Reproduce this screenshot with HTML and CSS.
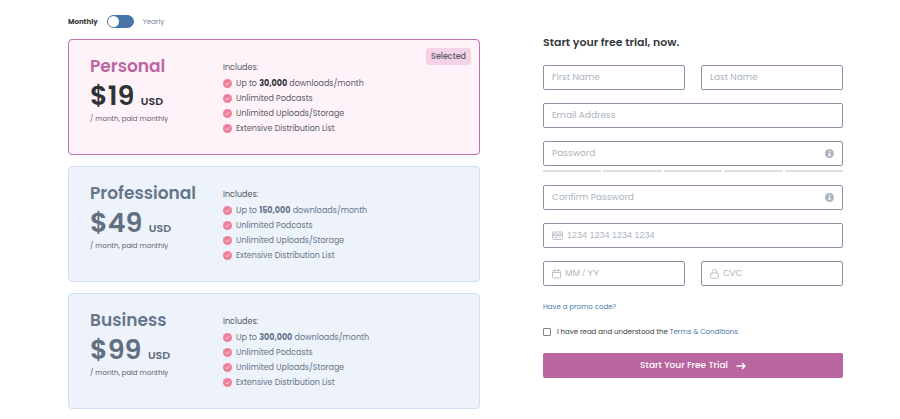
FILE: index.html
```html
<!DOCTYPE html>
<html lang="en">
<head>
<meta charset="utf-8">
<meta name="viewport" content="width=device-width, initial-scale=1">
<title>Start your free trial</title>
<link rel="stylesheet" href="styles.css">
</head>
<body>
<svg class="sprite" aria-hidden="true">
  <symbol id="check" viewBox="0 0 18 18"><circle cx="9" cy="9" r="9" fill="#f07f9b"/><path d="M5.5 9.2l2.4 2.3 4.6-4.6" fill="none" stroke="#fff" stroke-width="1.6"/></symbol>
  <symbol id="info" viewBox="0 0 18 18"><circle cx="9" cy="9" r="9" fill="#adb5c0"/><path d="M8 3.5h2.5V6H8zM6.8 7.5h3.7v5h1.2v1.7H6.8v-1.7H8V9.2H6.8z" fill="#fff"/></symbol>
</svg>
<main class="page">
  <section class="plans">
    <div class="billing">
      <span class="billing-active">Monthly</span>
      <button class="switch" type="button" role="switch" aria-checked="false" aria-label="Yearly billing"><span class="knob"></span></button>
      <span class="billing-other">Yearly</span>
    </div>
    <article class="plan plan-selected">
      <div class="summary">
        <h2 class="name">Personal</h2>
        <p class="price">$19 <span class="currency">USD</span></p>
        <p class="term">/ month, paid monthly</p>
      </div>
      <div class="details">
        <p class="includes">Includes:</p>
        <ul class="features">
          <li><svg class="check"><use href="#check"/></svg><span>Up to <b>30,000</b> downloads/month</span></li>
          <li><svg class="check"><use href="#check"/></svg><span>Unlimited Podcasts</span></li>
          <li><svg class="check"><use href="#check"/></svg><span>Unlimited Uploads/Storage</span></li>
          <li><svg class="check"><use href="#check"/></svg><span>Extensive Distribution List</span></li>
        </ul>
      </div>
      <span class="badge">Selected</span>
    </article>
    <article class="plan">
      <div class="summary">
        <h2 class="name">Professional</h2>
        <p class="price">$49 <span class="currency">USD</span></p>
        <p class="term">/ month, paid monthly</p>
      </div>
      <div class="details">
        <p class="includes">Includes:</p>
        <ul class="features">
          <li><svg class="check"><use href="#check"/></svg><span>Up to <b>150,000</b> downloads/month</span></li>
          <li><svg class="check"><use href="#check"/></svg><span>Unlimited Podcasts</span></li>
          <li><svg class="check"><use href="#check"/></svg><span>Unlimited Uploads/Storage</span></li>
          <li><svg class="check"><use href="#check"/></svg><span>Extensive Distribution List</span></li>
        </ul>
      </div>
    </article>
    <article class="plan">
      <div class="summary">
        <h2 class="name">Business</h2>
        <p class="price">$99 <span class="currency">USD</span></p>
        <p class="term">/ month, paid monthly</p>
      </div>
      <div class="details">
        <p class="includes">Includes:</p>
        <ul class="features">
          <li><svg class="check"><use href="#check"/></svg><span>Up to <b>300,000</b> downloads/month</span></li>
          <li><svg class="check"><use href="#check"/></svg><span>Unlimited Podcasts</span></li>
          <li><svg class="check"><use href="#check"/></svg><span>Unlimited Uploads/Storage</span></li>
          <li><svg class="check"><use href="#check"/></svg><span>Extensive Distribution List</span></li>
        </ul>
      </div>
    </article>
  </section>

  <form class="signup">
    <h1 class="title">Start your free trial, now.</h1>
    <div class="fields">
      <div class="pair">
        <label class="field"><input type="text" placeholder="First Name" aria-label="First Name"></label>
        <label class="field"><input type="text" placeholder="Last Name" aria-label="Last Name"></label>
      </div>
      <label class="field"><input type="email" placeholder="Email Address" aria-label="Email Address"></label>
      <div class="password">
        <label class="field"><input type="password" placeholder="Password" aria-label="Password"><svg class="info"><use href="#info"/></svg></label>
        <div class="strength"><i></i><i></i><i></i><i></i><i></i></div>
      </div>
      <label class="field"><input type="password" placeholder="Confirm Password" aria-label="Confirm Password"><svg class="info"><use href="#info"/></svg></label>
      <label class="field card-field">
        <svg class="icon" viewBox="0 0 11 10"><rect x=".5" y="1" width="10" height="7.5" rx="1"/><path d="M.5 3h10M.5 4.5h10M2.3 6.5h3.5M7.3 6.5h1.5"/></svg>
        <input type="text" placeholder="1234 1234 1234 1234" aria-label="Card number">
      </label>
      <div class="pair">
        <label class="field card-field">
          <svg class="icon icon-narrow" viewBox="0 0 9 10"><rect x=".5" y="1.5" width="8" height="7.5" rx="1"/><path d="M.5 3.5h8M2.5 0v2.5M6.5 0v2.5"/></svg>
          <input type="text" placeholder="MM / YY" aria-label="Expiry date">
        </label>
        <label class="field card-field">
          <svg class="icon icon-narrow" viewBox="0 0 9 10"><rect x=".7" y="4" width="7.6" height="5.3" rx="1"/><path d="M2.3 4V2.7a2.2 2.2 0 0 1 4.4 0V4"/></svg>
          <input type="text" placeholder="CVC" aria-label="CVC">
        </label>
      </div>
    </div>
    <a class="promo" href="#promo">Have a promo code?</a>
    <div class="consent">
      <input class="tick" type="checkbox" id="terms">
      <label for="terms">I have read and understood the <a href="#terms">Terms &amp; Conditions</a></label>
    </div>
    <button class="submit" type="submit">Start Your Free Trial
      <svg class="arrow" viewBox="0 0 10 8"><path d="M.5 4h8.5M6 1l3 3-3 3"/></svg>
    </button>
  </form>
</main>
</body>
</html>
```

FILE: styles.css
```css
* { box-sizing: border-box; }

body {
  margin: 0;
  background: #fff;
  color: #363a40;
  font: 7px/15px Poppins, Inter, sans-serif;
}

h1, h2, p, ul { margin: 0; padding: 0; }
ul { list-style: none; }
a { color: #4878ac; text-decoration: none; }
.sprite { display: none; }

.page {
  display: flex;
  align-items: flex-start;
  gap: 63px;
  padding: 15px 57px 10px 68px;
}

.plans { flex: 412 1 0; min-width: 0; display: flex; flex-direction: column; gap: 11px; }

.billing { display: flex; align-items: center; height: 13px; gap: 9px; line-height: 15px; }
.billing-active { font-weight: 700; }
.billing-other { color: #748496; }
.switch {
  display: flex;
  width: 27px;
  height: 13px;
  padding: 0;
  border: 1px solid #4575a9;
  border-radius: 7px;
  background: #4575a9;
}
.knob { width: 11px; height: 11px; border-radius: 50%; background: #fff; }

.plan {
  position: relative;
  display: grid;
  grid-template-columns: 133px 1fr;
  min-height: 116px;
  padding: 14px 21px;
  border: 1px solid #d0dff0;
  border-radius: 4px;
  background: #eef2fa;
  color: #65768a;
}
.plan-selected { border-color: #bf70aa; background: #fff3fa; color: #585c64; }

.name { font-size: 17px; line-height: 24px; font-weight: 600; }
.plan-selected .name { color: #bb64a1; }
.price { font-size: 27px; line-height: 36px; font-weight: 600; color: #607080; }
.currency { font-size: 11px; line-height: 1; }
.plan-selected .price { color: #303236; }
.term { color: #5c646e; line-height: 9px; white-space: nowrap; }

.includes { margin-top: 6px; color: #505860; font-size: 8px; line-height: 16px; }
.features li { display: flex; align-items: center; gap: 4px; height: 15px; font-size: 8px; }
.features b { font-weight: 700; }
.plan-selected b { color: #303236; }
.check { width: 9px; height: 9px; flex: none; }

.badge {
  position: absolute;
  top: 8px;
  right: 8px;
  padding: 1px 5px;
  border-radius: 3px;
  background: #f5d3e7;
  font-size: 8px;
  font-weight: 500;
}

.signup { flex: 300 1 0; min-width: 0; display: flex; flex-direction: column; padding-top: 19px; }
.title { margin-bottom: 15px; font-size: 11px; line-height: 16px; font-weight: 600; }
.fields { display: flex; flex-direction: column; gap: 13px; }
.pair { display: grid; grid-template-columns: repeat(2, minmax(0, 1fr)); gap: 16px; }

.field {
  display: flex;
  align-items: center;
  gap: 4px;
  height: 25px;
  padding: 0 8px;
  border: 1px solid #8793a3;
  border-radius: 2px;
}
.field input {
  flex: 1;
  width: 100%;
  min-width: 0;
  padding: 0;
  border: 0;
  outline: 0;
  background: none;
  color: #363a40;
  font: inherit;
  font-size: 9px;
}
.field input::placeholder { color: #adb4be; opacity: 1; }
.field.card-field input { font-family: "Liberation Sans", sans-serif; }
.info { width: 9px; height: 9px; flex: none; }
.icon { width: 11px; height: 10px; flex: none; fill: none; stroke: #bcc2ca; stroke-width: 1; }
.icon-narrow { width: 9px; }

.strength { display: grid; grid-template-columns: repeat(5, 1fr); gap: 2px; margin-top: 4px; }
.strength i { height: 2px; background: #dcdee1; }

.promo { align-self: flex-start; margin-top: 13px; }
.consent { display: flex; align-items: center; gap: 6px; margin-top: 10px; }
.tick {
  appearance: none;
  width: 8px;
  height: 8px;
  margin: 0;
  border: 1px solid #858585;
  border-radius: 1px;
  background: #fff;
}
.tick:checked { background: #4575a9; }

.submit {
  display: flex;
  align-items: center;
  justify-content: center;
  gap: 8px;
  height: 25px;
  margin-top: 14px;
  padding: 0;
  border: 0;
  border-radius: 2px;
  background: #b9659f;
  color: #fff;
  font: inherit;
  font-size: 9px;
  font-weight: 500;
}
.arrow { width: 10px; height: 8px; fill: none; stroke: #fff; stroke-width: 1.4; }
```
